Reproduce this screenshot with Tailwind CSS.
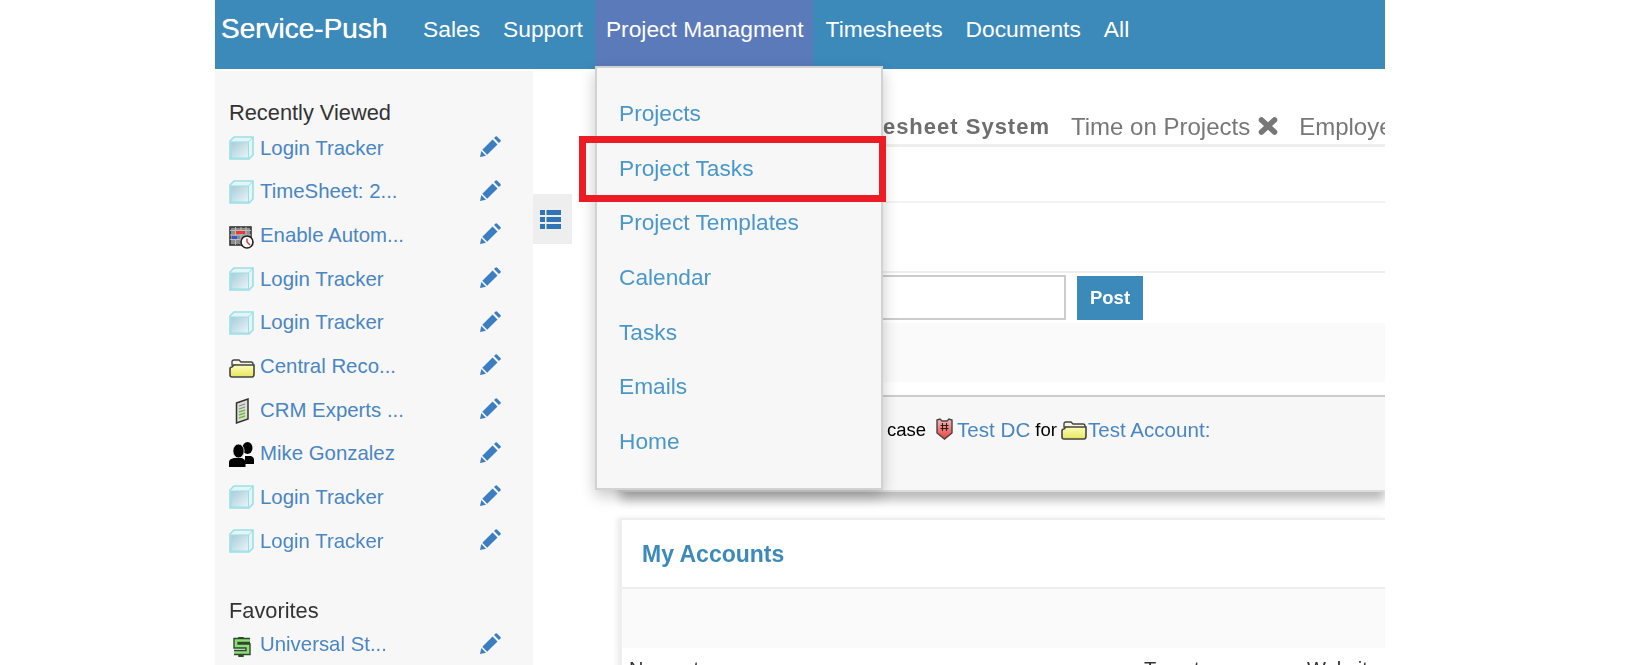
<!DOCTYPE html>
<html lang="en">
<head>
<meta charset="utf-8">
<title>Service-Push</title>
<script src="https://cdn.jsdelivr.net/npm/@tailwindcss/browser@4"></script>
</head>
<body class="bg-white overflow-hidden font-['Liberation_Sans',Arial,sans-serif]">
<svg width="0" height="0" class="absolute">
  <defs>
    <linearGradient id="g-cube" x1="0" y1="0" x2="1" y2="1"><stop offset="0" stop-color="#a9cbd9"/><stop offset="1" stop-color="#e8f6f8"/></linearGradient>
    <linearGradient id="g-folder" x1="0" y1="0" x2="0" y2="1"><stop offset="0" stop-color="#fdfdb8"/><stop offset="1" stop-color="#e6e65c"/></linearGradient>
    <linearGradient id="g-shield" x1="0" y1="0" x2="0" y2="1"><stop offset="0" stop-color="#f8b8b8"/><stop offset="1" stop-color="#ea3f3f"/></linearGradient>
    <symbol id="cube" viewBox="0 0 25 24">
      <path d="M1 5 L5 1 H24 V19 L20 23 H1 Z" fill="#e4f5f7" stroke="#9adfe3" stroke-width="1.6"/>
      <path d="M2 6 H19.5 V22 H2 Z" fill="url(#g-cube)" stroke="#9adfe3" stroke-width="1"/>
      <path d="M19.5 6 L24 1" stroke="#9adfe3" stroke-width="1"/>
    </symbol>
    <symbol id="pencil" viewBox="0 0 21 22">
      <path d="M0 21 L1.3 15 L6 19.7 Z" fill="#3b7fc2"/>
      <path d="M2.3 13.8 L12.6 3.5 L17.5 8.4 L7.2 18.7 Z" fill="#3b7fc2"/>
      <path d="M14 2.1 L15.6 .5 Q16.2 0 16.9 .5 L20.5 4.1 Q21 4.8 20.5 5.4 L18.9 7 Z" fill="#3b7fc2"/>
    </symbol>
    <symbol id="folder" viewBox="0 0 26 20">
      <path d="M3 6 V3 Q3 1 5 1 H10 L12 3 H22 Q24 3 24 5 V8 Z" fill="#f6f6e2" stroke="#444" stroke-width="1.4"/>
      <path d="M5 6 H25 V15 Q25 18 23 18 H3 Q1 18 1 16 V10 Q1 8 3 8 Z" fill="url(#g-folder)" stroke="#444" stroke-width="1.6"/>
    </symbol>
  </defs>
</svg>

<div class="relative ml-[215px] w-[1170px] h-[665px] overflow-hidden blur-[0.35px]">
  <header class="h-[69px] bg-[#3b8ab9] flex items-start text-white">
    <div class="w-[198px] pl-[6px] text-[28px] leading-[58px] font-normal [text-shadow:0_0_.8px_#fff] whitespace-nowrap">Service-Push</div>
    <nav class="flex text-[22.8px] leading-[58px] whitespace-nowrap h-full">
      <a class="pl-[10px] pr-[11px] h-full">Sales</a>
      <a class="px-[12px] h-full">Support</a>
      <a class="pl-[11px] pr-[9px] h-full bg-[#5b7ab9]">Project Managment</a>
      <a class="pl-[13px] pr-[12px] h-full">Timesheets</a>
      <a class="px-[11px] h-full">Documents</a>
      <a class="px-[12px] h-full">All</a>
    </nav>
  </header>

  <div class="flex mt-[2px]">
    <aside class="w-[318px] h-[595px] shrink-0 bg-[#f7f7f7] pt-[29px] pl-[14px] pr-[32px]">
      <h2 class="h-[26px] text-[21.8px] leading-[26px] text-[#333] whitespace-nowrap">Recently Viewed</h2>
      <ul class="text-[20.4px] text-[#4a86c2]">
        <li class="h-[43.7px] flex items-center"><svg class="w-[25px] h-[24px] shrink-0"><use href="#cube"/></svg><span class="ml-[6px] flex-1 whitespace-nowrap">Login Tracker</span><svg class="w-[21px] h-[22px] shrink-0 -translate-y-[1px]"><use href="#pencil"/></svg></li>
        <li class="h-[43.7px] flex items-center"><svg class="w-[25px] h-[24px] shrink-0"><use href="#cube"/></svg><span class="ml-[6px] flex-1 whitespace-nowrap">TimeSheet: 2...</span><svg class="w-[21px] h-[22px] shrink-0 -translate-y-[1px]"><use href="#pencil"/></svg></li>
        <li class="h-[43.7px] flex items-center">
          <svg class="w-[25px] h-[24px] shrink-0 translate-y-[2px]" viewBox="0 0 25 24">
            <rect x="1" y="2" width="21" height="18" fill="#8d8d8d" stroke="#333" stroke-width="1.6"/>
            <path d="M1 5.5 H22 M1 10 H22 M1 14.5 H22 M6.5 2 V20 M12 2 V20 M17 2 V20" stroke="#bbb" stroke-width="1"/>
            <rect x="7" y="6" width="9" height="3" fill="#e83a3a"/>
            <rect x="3" y="11" width="5" height="3" fill="#3c55d8"/>
            <circle cx="18" cy="17" r="6" fill="#fff" stroke="#222" stroke-width="1.6"/>
            <path d="M18 13.5 V17 L21 20" fill="none" stroke="#d83030" stroke-width="1.4"/>
          </svg>
          <span class="ml-[6px] flex-1 whitespace-nowrap">Enable Autom...</span><svg class="w-[21px] h-[22px] shrink-0 -translate-y-[1px]"><use href="#pencil"/></svg></li>
        <li class="h-[43.7px] flex items-center"><svg class="w-[25px] h-[24px] shrink-0"><use href="#cube"/></svg><span class="ml-[6px] flex-1 whitespace-nowrap">Login Tracker</span><svg class="w-[21px] h-[22px] shrink-0 -translate-y-[1px]"><use href="#pencil"/></svg></li>
        <li class="h-[43.7px] flex items-center"><svg class="w-[25px] h-[24px] shrink-0"><use href="#cube"/></svg><span class="ml-[6px] flex-1 whitespace-nowrap">Login Tracker</span><svg class="w-[21px] h-[22px] shrink-0 -translate-y-[1px]"><use href="#pencil"/></svg></li>
        <li class="h-[43.7px] flex items-center"><svg class="w-[26px] h-[20px] shrink-0 translate-y-[3px]"><use href="#folder"/></svg><span class="ml-[5px] flex-1 whitespace-nowrap">Central Reco...</span><svg class="w-[21px] h-[22px] shrink-0 -translate-y-[1px]"><use href="#pencil"/></svg></li>
        <li class="h-[43.7px] flex items-center">
          <svg class="w-[25px] h-[26px] shrink-0 translate-y-[1px]" viewBox="0 0 25 26">
            <path d="M7.5 5 L19 1 V21 L7.5 25 Z" fill="#dcdcd6" stroke="#333" stroke-width="1.5"/>
            <path d="M10 8 L16 6 M10 11 L16 9" stroke="#8a8a8a" stroke-width="1.2"/>
            <path d="M10 14 L16 12 M10 17 L16 15 M10 20 L16 18" stroke="#6fbf3a" stroke-width="1.4"/>
          </svg>
          <span class="ml-[6px] flex-1 whitespace-nowrap">CRM Experts ...</span><svg class="w-[21px] h-[22px] shrink-0 -translate-y-[1px]"><use href="#pencil"/></svg></li>
        <li class="h-[43.7px] flex items-center">
          <svg class="w-[25px] h-[25px] shrink-0 translate-y-[1px]" viewBox="0 0 25 25">
            <ellipse cx="18.5" cy="6" rx="5" ry="6" fill="#000"/>
            <path d="M16 14 H22 Q25 15 25 18 V22 H16 Z" fill="#000"/>
            <ellipse cx="9.5" cy="9" rx="5.6" ry="7" fill="#000" stroke="#f7f7f7" stroke-width=".8"/>
            <path d="M0 25 V20 Q0 17 5 16 H13 Q16 17 16.5 20 V25 Z" fill="#000"/>
          </svg>
          <span class="ml-[6px] flex-1 whitespace-nowrap">Mike Gonzalez</span><svg class="w-[21px] h-[22px] shrink-0 -translate-y-[1px]"><use href="#pencil"/></svg></li>
        <li class="h-[43.7px] flex items-center"><svg class="w-[25px] h-[24px] shrink-0"><use href="#cube"/></svg><span class="ml-[6px] flex-1 whitespace-nowrap">Login Tracker</span><svg class="w-[21px] h-[22px] shrink-0 -translate-y-[1px]"><use href="#pencil"/></svg></li>
        <li class="h-[43.7px] flex items-center"><svg class="w-[25px] h-[24px] shrink-0"><use href="#cube"/></svg><span class="ml-[6px] flex-1 whitespace-nowrap">Login Tracker</span><svg class="w-[21px] h-[22px] shrink-0 -translate-y-[1px]"><use href="#pencil"/></svg></li>
      </ul>
      <h2 class="mt-[36px] h-[24px] text-[21.8px] leading-[24px] text-[#333] whitespace-nowrap">Favorites</h2>
      <ul class="text-[20.4px] text-[#4a86c2]">
        <li class="h-[43.7px] flex items-center">
          <svg class="w-[25px] h-[24px] shrink-0 translate-y-[2px]" viewBox="0 0 25 24">
            <path d="M21 5.5 H7 V11 H19 V17.5 H5 M12 2 V5 M12 18 V22" fill="none" stroke="#2a4a2a" stroke-width="5.4"/>
            <path d="M21 5.5 H7 V11 H19 V17.5 H5" fill="none" stroke="#8fdc7a" stroke-width="2.6"/>
          </svg>
          <span class="ml-[6px] flex-1 whitespace-nowrap">Universal St...</span><svg class="w-[21px] h-[22px] shrink-0 -translate-y-[1px]"><use href="#pencil"/></svg></li>
      </ul>
    </aside>

    <button class="mt-[123px] w-[39px] h-[50px] shrink-0 bg-[#eeeeee] flex items-center justify-center pr-[4px]" aria-label="Toggle list">
      <svg class="w-[21px] h-[19px]" viewBox="0 0 21 19" fill="#2f74b5"><rect y="0" width="5" height="5"/><rect x="6.5" y="0" width="14.5" height="5"/><rect y="7" width="5" height="5"/><rect x="6.5" y="7" width="14.5" height="5"/><rect y="14" width="5" height="5"/><rect x="6.5" y="14" width="14.5" height="5"/></svg>
    </button>

    <main class="ml-[48px] w-[765px] shrink-0">
      <div class="h-[76px] border-b-[3px] border-[#eeeeee] flex items-end pb-[1px] text-[24px] leading-[32px] text-[#777] whitespace-nowrap overflow-hidden">
        <b class="w-[430px] shrink-0 text-right text-[22px] tracking-[1px] text-[#6e6e6e]">Timesheet System</b>
        <span class="ml-[21px]">Time on Projects</span>
        <svg class="ml-[8px] mb-[8px] w-[20px] h-[18px] shrink-0" viewBox="0 0 20 18"><path d="M3.5 3 L16.5 15 M16.5 3 L3.5 15" stroke="#777" stroke-width="5.6" stroke-linecap="round"/></svg>
        <span class="ml-[21px]">Employee</span>
      </div>
      <div class="h-[56px] border-b-2 border-[#f2f2f2]"></div>
      <div class="h-[70px] border-b-2 border-[#eeeeee]"></div>
      <div class="h-[50px] flex items-start pt-[2px] pl-[200px]">
        <div class="w-[246px] h-[45px] border-2 border-[#cccccc] bg-white"></div>
        <button class="ml-[11px] mt-[1px] w-[66px] h-[44px] bg-[#3b8ab9] text-white text-[18.5px] font-bold">Post</button>
      </div>
      <div class="h-[59px] bg-[#fafafa]"></div>
      <section class="mt-[13px] h-[97px] bg-[#f7f7f7] border-t-2 border-b-2 border-t-[#cccccc] border-b-[#dddddd] shadow-[0_8px_10px_rgba(0,0,0,0.28)] pl-[267px] pt-[21px] flex items-start whitespace-nowrap text-[20.6px] leading-[24px] text-[#4a86c2]">
        <span class="text-[18.5px] text-black">case</span>
        <svg class="ml-[10px] w-[17px] h-[22px] shrink-0" viewBox="0 0 17 22">
          <path d="M1 2 L4 1 L6 3 H11 L13 1 L16 2 V15 L8.5 21 L1 15 Z" fill="url(#g-shield)" stroke="#444" stroke-width="1.4"/>
          <path d="M6.5 5 V13 M10.5 5 V13 M4.5 7.5 H12.5 M4.5 10.5 H12.5" stroke="#222" stroke-width="1.1"/>
        </svg>
        <span class="ml-[4px]">Test DC</span>
        <span class="ml-[5px] text-[18.5px] text-black">for</span>
        <svg class="ml-[4px] mt-[3px] w-[26px] h-[20px] shrink-0"><use href="#folder"/></svg>
        <span class="ml-[1px]">Test Account:</span>
      </section>
      <section class="mt-[26px] h-[160px] bg-white border-t-2 border-l-2 border-[#eeeeee] shadow-[-3px_0_5px_rgba(0,0,0,0.08)]">
        <div class="h-[69px] border-b-2 border-[#eeeeee] pl-[20px] text-[23px] leading-[68px] font-bold text-[#3b8ab9]">My Accounts</div>
        <div class="h-[59px] bg-[#fafafa]"></div>
        <div class="flex pl-[7px] pt-[9px] text-[20px] leading-[24px] text-[#333]">
          <span class="w-[515px] shrink-0">Nearest</span>
          <span class="w-[163px] shrink-0">Target</span>
          <span>Website</span>
        </div>
      </section>
    </main>
  </div>

  <div class="absolute left-[380px] top-[66px] w-[288px] h-[424px] bg-[#f7f7f7] border-2 border-[#d2d2d2] shadow-[0_6px_14px_rgba(0,0,0,0.22)] pt-[17.5px] pl-[22px] text-[22.7px] text-[#4a97c9]">
    <ul>
      <li class="h-[54.7px] flex items-center">Projects</li>
      <li class="h-[54.7px] flex items-center">Project Tasks</li>
      <li class="h-[54.7px] flex items-center">Project Templates</li>
      <li class="h-[54.7px] flex items-center">Calendar</li>
      <li class="h-[54.7px] flex items-center">Tasks</li>
      <li class="h-[54.7px] flex items-center">Emails</li>
      <li class="h-[54.7px] flex items-center">Home</li>
    </ul>
  </div>
  <div class="absolute left-[364px] top-[136px] w-[307px] h-[66px] border-[7px] border-[#ed1c24]"></div>
</div>
</body>
</html>
